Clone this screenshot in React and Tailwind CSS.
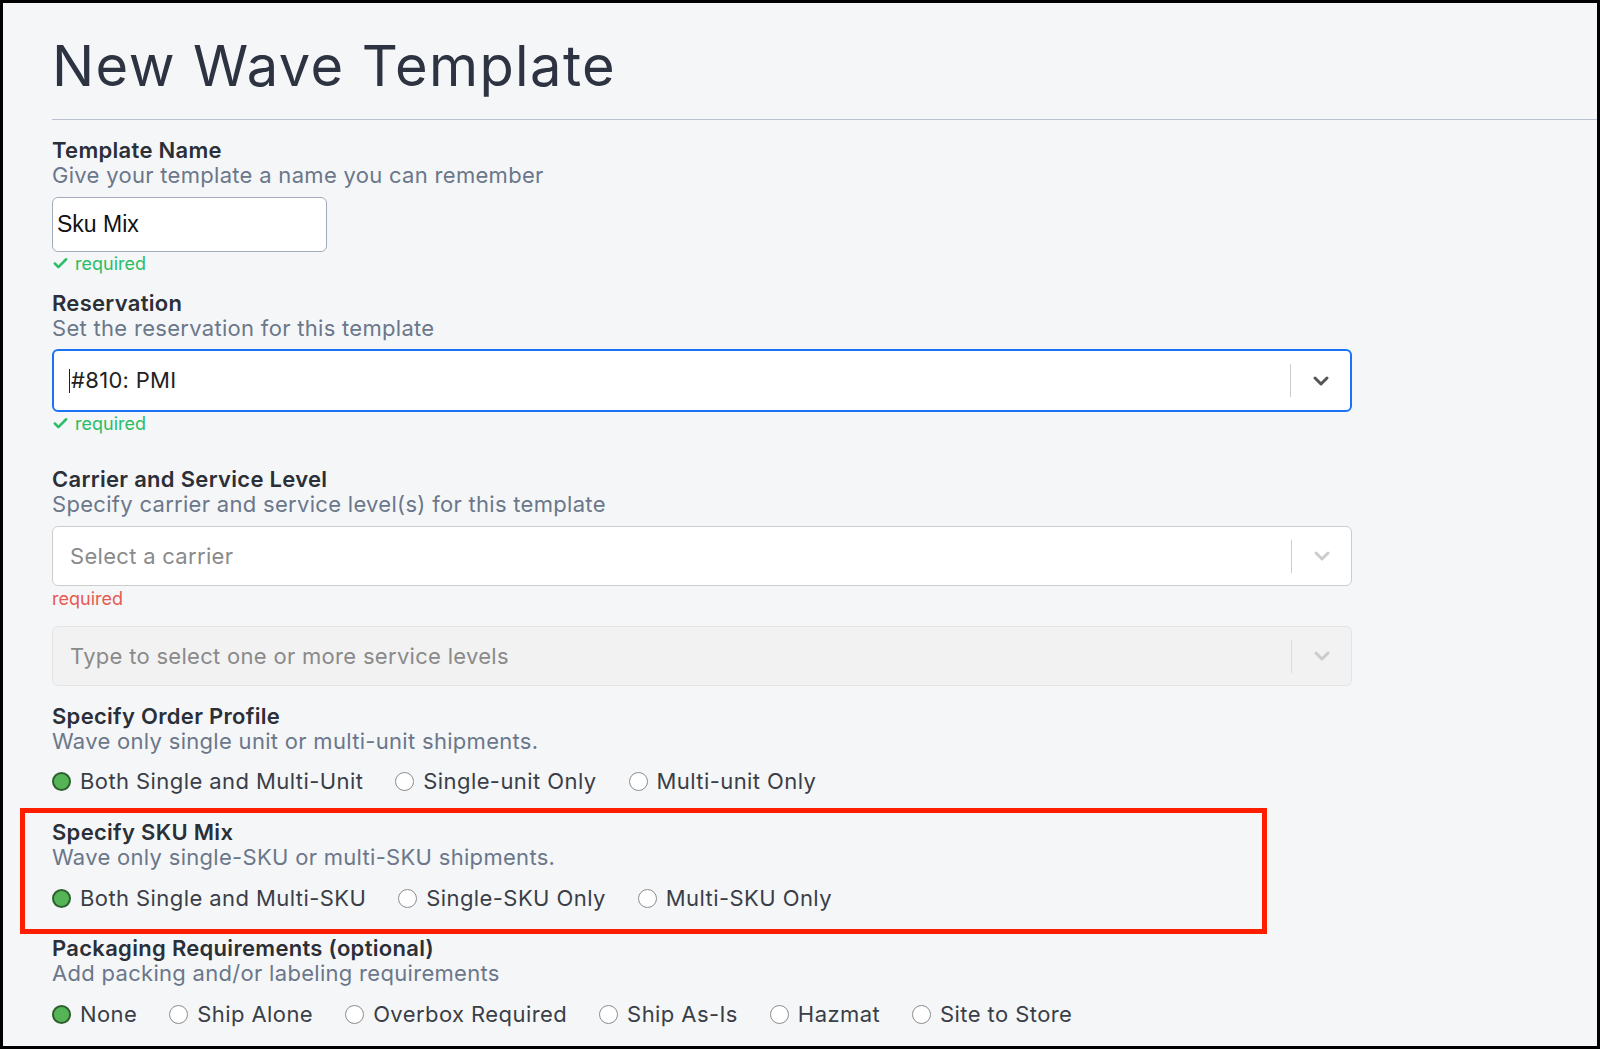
// App.jsx — New Wave Template form

import { Check, ChevronDown } from 'lucide-react'

const ORDER_PROFILE = ['Both Single and Multi-Unit', 'Single-unit Only', 'Multi-unit Only']
const SKU_MIX = ['Both Single and Multi-SKU', 'Single-SKU Only', 'Multi-SKU Only']
const PACKAGING = ['None', 'Ship Alone', 'Overbox Required', 'Ship As-Is', 'Hazmat', 'Site to Store']

function FieldHead({ title, sub }) {
  return (
    <div>
      <p className="text-[22px] leading-[25px] tracking-[0.3px] font-semibold text-[#2b2f38]">{title}</p>
      <p className="text-[22px] leading-[25px] tracking-[0.3px] text-[#6b778a]">{sub}</p>
    </div>
  )
}

function Ok() {
  return (
    <div className="flex items-center gap-[6px] h-[20px] text-[18px] text-[#2bbd65]">
      <Check size={17} strokeWidth={3.5} />
      <span>required</span>
    </div>
  )
}

function Radios({ items, className = '' }) {
  return (
    <div className={`flex items-center gap-[32px] h-[28px] ${className}`}>
      {items.map((label, i) => (
        <label key={label} className="flex items-center gap-[9px] text-[22px] tracking-[0.42px] text-[#3a3e47]">
          {i === 0 ? (
            <span className="w-[19px] h-[19px] rounded-full bg-[#55b455] border-2 border-[#2e5f2e]" />
          ) : (
            <span className="w-[19px] h-[19px] rounded-full bg-white border border-[#8c8c8c]" />
          )}
          <span>{label}</span>
        </label>
      ))}
    </div>
  )
}

function Select({ value, placeholder, active, disabled, className = '' }) {
  return (
    <div
      className={`flex items-center w-[1300px] rounded-[6px] ${
        active
          ? 'h-[63px] border-2 border-[#1a73f5] bg-white'
          : disabled
          ? 'h-[60px] border border-[#e4e4e4] bg-[#f2f2f2]'
          : 'h-[60px] border border-[#cccccc] bg-white'
      } ${className}`}
    >
      <div className={`flex-1 flex items-center text-[22px] tracking-[0.3px] ${active ? 'pl-[15px] text-[#222]' : 'pl-[17px] text-[#8a8a8a]'}`}>
        {active && <span className="w-px h-[24px] bg-[#222] mr-px" />}
        {value || placeholder}
      </div>
      <div className={`w-px h-[33px] ${disabled ? 'bg-[#dcdcdc]' : 'bg-[#cccccc]'}`} />
      <div className={`w-[59px] flex justify-center ${active ? 'text-[#555]' : 'text-[#cccccc]'}`}>
        <ChevronDown size={24} strokeWidth={3} />
      </div>
    </div>
  )
}

export default function App() {
  return (
    <div
      className="w-[1600px] h-[1049px] border-[3px] border-black bg-[#f5f6f8] overflow-hidden"
      style={{ fontFamily: 'Inter, "Noto Sans", sans-serif' }}
    >
      {/* Header */}
      <h1 className="pl-[49px] pt-[31px] text-[56px] leading-[64px] tracking-[1.4px] text-[#2d3340]">New Wave Template</h1>
      <div className="ml-[49px] mt-[21px] h-px bg-[#b9c1d1]" />

      <div className="pl-[49px]">
        {/* Template name */}
        <div className="mt-[18px]">
          <FieldHead title="Template Name" sub="Give your template a name you can remember" />
          <div className="mt-[9px] w-[275px] h-[55px] flex items-center pl-[4px] rounded-[6px] border border-[#a3abbb] bg-white text-[23px] text-[#111]" style={{ fontFamily: '"Liberation Sans", Arial, sans-serif' }}>
            Sku Mix
          </div>
          <div className="mt-px"><Ok /></div>
        </div>

        {/* Reservation */}
        <div className="mt-[18px]">
          <FieldHead title="Reservation" sub="Set the reservation for this template" />
          <Select className="mt-[8px]" active value="#810: PMI" />
          <div className="mt-px"><Ok /></div>
        </div>

        {/* Carrier */}
        <div className="mt-[34px]">
          <FieldHead title="Carrier and Service Level" sub="Specify carrier and service level(s) for this template" />
          <Select className="mt-[9px]" placeholder="Select a carrier" />
          <p className="h-[20px] mt-[3px] text-[18px] leading-[20px] text-[#e65a52]">required</p>
          <Select className="mt-[17px]" disabled placeholder="Type to select one or more service levels" />
        </div>

        {/* Order profile */}
        <div className="mt-[18px]">
          <FieldHead title="Specify Order Profile" sub="Wave only single unit or multi-unit shipments." />
          <Radios className="mt-[13px]" items={ORDER_PROFILE} />
        </div>

        {/* SKU mix — highlighted */}
        <div className="mt-[13px] -ml-[32px] w-[1247px] pl-[27px] pt-[7px] pb-[17px] border-[5px] border-[#ff1d00]">
          <FieldHead title="Specify SKU Mix" sub="Wave only single-SKU or multi-SKU shipments." />
          <Radios className="mt-[14px]" items={SKU_MIX} />
        </div>

        {/* Packaging */}
        <div className="mt-[2px]">
          <FieldHead title="Packaging Requirements (optional)" sub="Add packing and/or labeling requirements" />
          <Radios className="mt-[14px]" items={PACKAGING} />
        </div>
      </div>
    </div>
  )
}
